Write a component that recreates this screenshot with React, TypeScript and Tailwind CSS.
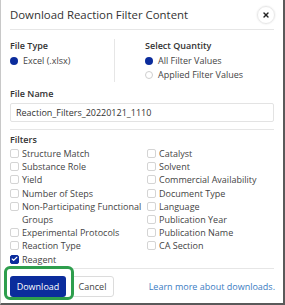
import { Check, X } from "lucide-react";

const gauche = [
  "Structure Match",
  "Substance Role",
  "Yield",
  "Number of Steps",
  "Non-Participating Functional Groups",
  "Experimental Protocols",
  "Reaction Type",
  "Reagent",
];

const droite = [
  "Catalyst",
  "Solvent",
  "Commercial Availability",
  "Document Type",
  "Language",
  "Publication Year",
  "Publication Name",
  "CA Section",
];

function Radio({ coche, libelle }: { coche?: boolean; libelle: string }) {
  return (
    <div className="flex h-[14px] items-center gap-[5px]">
      <span
        className={`h-[8px] w-[8px] shrink-0 rounded-full ${
          coche ? "bg-[#0b2c9c]" : "border border-[#cfcfcf] bg-white"
        }`}
      />
      <span>{libelle}</span>
    </div>
  );
}

function Case({ libelle, coche }: { libelle: string; coche?: boolean }) {
  return (
    <div className="flex items-start gap-[3px] leading-[13.2px]">
      <span
        className={`mt-[2px] flex h-[9px] w-[9px] shrink-0 items-center justify-center rounded-[2px] border ${
          coche ? "border-[#0b2c9c] bg-[#0b2c9c] text-white" : "border-[#d4d4d4] bg-white"
        }`}
      >
        {coche && <Check className="h-[8px] w-[8px]" strokeWidth={4} />}
      </span>
      <span>{libelle}</span>
    </div>
  );
}

export default function App() {
  return (
    <div
      className="relative h-[305px] w-[285px] overflow-hidden border-b-2 border-l border-r-2 border-b-[#5a5a5a] border-l-[#c8c8c8] border-r-[#5a5a5a] bg-white px-[9px] text-[9px] text-[#444]"
      style={{ fontFamily: '"Open Sans", "Noto Sans", sans-serif' }}
    >
      <div className="flex h-[30px] items-center justify-between border-b border-[#e6e6e6]">
        <span className="text-[11.4px] text-[#333]">Download Reaction Filter Content</span>
        <span className="mr-[-1px] flex h-[18px] w-[18px] items-center justify-center rounded-full border border-[#e8e8e8] shadow-[0_0_2px_rgba(0,0,0,0.12)]">
          <X className="h-[8px] w-[8px] text-[#222]" strokeWidth={4} />
        </span>
      </div>

      <div className="mt-[9px] flex">
        <div className="w-[105px] border-r border-[#e6e6e6] pb-[4px]">
          <div className="mb-[2px] leading-[13px] font-semibold text-[#333]">File Type</div>
          <Radio coche libelle="Excel (.xlsx)" />
        </div>
        <div className="pl-[30px]">
          <div className="mb-[2px] leading-[13px] font-semibold text-[#333]">Select Quantity</div>
          <Radio coche libelle="All Filter Values" />
          <Radio libelle="Applied Filter Values" />
        </div>
      </div>

      <div className="mt-[5px] leading-[13px] font-semibold text-[#333]">File Name</div>
      <div className="mt-[3px] flex h-[19px] items-center rounded-[2px] border border-[#e3e3e3] px-[5px] text-[#333]">
        Reaction_Filters_20220121_1110
      </div>

      <div className="mt-[7px] border-t border-[#e6e6e6] pt-[3px]">
        <div className="leading-[13px] font-semibold text-[#333]">Filters</div>
        <div className="mt-[1px] grid grid-cols-[137px_1fr]">
          <div>
            {gauche.map((l) => (
              <Case key={l} libelle={l} coche={l === "Reagent"} />
            ))}
          </div>
          <div>
            {droite.map((l) => (
              <Case key={l} libelle={l} />
            ))}
          </div>
        </div>
      </div>

      <div className="mt-[2px] flex items-center justify-between border-t border-[#e6e6e6] pt-[7px]">
        <div className="flex gap-[5px]">
          <button className="h-[21px] w-[56px] rounded-[3px] bg-[#0b2c9c] text-white">Download</button>
          <button className="h-[21px] w-[43px] rounded-[3px] border border-[#dcdcdc] bg-white text-[#444]">
            Cancel
          </button>
        </div>
        <span className="mr-[-1px] text-[#3b7cc2]">Learn more about downloads.</span>
      </div>

      <div className="absolute left-[3px] top-[266px] h-[34px] w-[70px] rounded-[6px] border-[3px] border-[#2e9e4d]" />
    </div>
  );
}
